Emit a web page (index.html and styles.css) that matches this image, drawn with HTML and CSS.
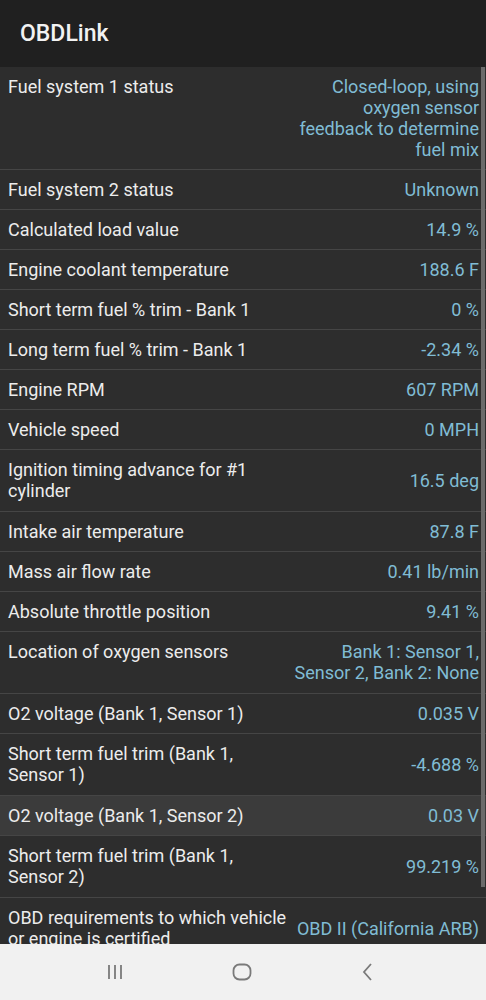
FILE: index.html
```html
<!DOCTYPE html>
<html lang="en">
<head>
    <meta charset="UTF-8">
    <meta name="viewport" content="width=device-width, initial-scale=1.0">
    <title>OBDLink</title>
    <link rel="stylesheet" href="styles.css">
</head>
<body>
    <header class="appbar">
        <h1>OBDLink</h1>
    </header>

    <main class="pid-list">
        <div class="row">
            <div class="label">Fuel system 1 status</div>
            <div class="value">Closed-loop, using oxygen sensor feedback to determine fuel mix</div>
        </div>
        <div class="row">
            <div class="label">Fuel system 2 status</div>
            <div class="value">Unknown</div>
        </div>
        <div class="row">
            <div class="label">Calculated load value</div>
            <div class="value">14.9 %</div>
        </div>
        <div class="row">
            <div class="label">Engine coolant temperature</div>
            <div class="value">188.6 F</div>
        </div>
        <div class="row">
            <div class="label">Short term fuel % trim - Bank 1</div>
            <div class="value">0 %</div>
        </div>
        <div class="row">
            <div class="label">Long term fuel % trim - Bank 1</div>
            <div class="value">-2.34 %</div>
        </div>
        <div class="row">
            <div class="label">Engine RPM</div>
            <div class="value">607 RPM</div>
        </div>
        <div class="row">
            <div class="label">Vehicle speed</div>
            <div class="value">0 MPH</div>
        </div>
        <div class="row tall">
            <div class="label">Ignition timing advance for #1 cylinder</div>
            <div class="value">16.5 deg</div>
        </div>
        <div class="row">
            <div class="label">Intake air temperature</div>
            <div class="value">87.8 F</div>
        </div>
        <div class="row">
            <div class="label">Mass air flow rate</div>
            <div class="value">0.41 lb/min</div>
        </div>
        <div class="row">
            <div class="label">Absolute throttle position</div>
            <div class="value">9.41 %</div>
        </div>
        <div class="row tall">
            <div class="label">Location of oxygen sensors</div>
            <div class="value">Bank 1: Sensor 1, Sensor 2, Bank 2: None</div>
        </div>
        <div class="row">
            <div class="label">O2 voltage (Bank 1, Sensor 1)</div>
            <div class="value">0.035 V</div>
        </div>
        <div class="row tall">
            <div class="label">Short term fuel trim (Bank 1, Sensor 1)</div>
            <div class="value">-4.688 %</div>
        </div>
        <div class="row selected">
            <div class="label">O2 voltage (Bank 1, Sensor 2)</div>
            <div class="value">0.03 V</div>
        </div>
        <div class="row tall">
            <div class="label">Short term fuel trim (Bank 1, Sensor 2)</div>
            <div class="value">99.219 %</div>
        </div>
        <div class="row">
            <div class="label">OBD requirements to which vehicle or engine is certified</div>
            <div class="value">OBD II (California ARB)</div>
        </div>

        <!-- thanh cuộn -->
        <div class="scroll-thumb"></div>
    </main>

    <nav class="navbar">
        <svg class="nav-icon" width="24" height="24" viewBox="0 0 24 24">
            <path d="M6 5v14M12 5v14M18 5v14" stroke="#7a7a7a" stroke-width="1.8" fill="none"/>
        </svg>
        <svg class="nav-icon" width="24" height="24" viewBox="0 0 24 24">
            <rect x="3.5" y="4.5" width="17" height="15" rx="6" stroke="#7a7a7a" stroke-width="1.8" fill="none"/>
        </svg>
        <svg class="nav-icon" width="24" height="24" viewBox="0 0 24 24">
            <path d="M15 4l-7 8 7 8" stroke="#7a7a7a" stroke-width="1.8" fill="none"/>
        </svg>
    </nav>
</body>
</html>
```
FILE: styles.css
```css
/* Reset */
body, h1 {
    margin: 0;
    padding: 0;
}

body {
    background-color: #2d2d2d;
    font-family: Roboto, "Noto Sans", sans-serif;
    width: 486px;
    height: 1000px;
    overflow: hidden;
}

.appbar {
    background-color: #202020;
    height: 67px;
    padding-left: 20px;
    display: flex;
    align-items: center;
}

.appbar h1 {
    color: #f2f2f2;
    font-size: 23px;
    font-weight: 500;
}

.pid-list {
    position: relative;
    height: 877px;
    overflow: hidden;
}

.row {
    display: flex;
    gap: 3px;
    padding: 9px 7px 9px 8px;
    border-bottom: 1px solid #454545;
    font-size: 18px;
    line-height: 21px;
}

/* hàng hai dòng cao hơn một chút */
.row.tall {
    padding-bottom: 10px;
}

.row.selected {
    background-color: #3b3b3b;
}

.label {
    flex: 1;
    color: #ececec;
    align-self: flex-start;
}

.value {
    width: 187px;
    color: #80bcd4;
    text-align: right;
    align-self: center;
}

.scroll-thumb {
    position: absolute;
    top: 0;
    right: 1px;
    width: 4px;
    height: 820px;
    background-color: #6b6b6b;
}

.navbar {
    height: 56px;
    background-color: #f1f1f1;
    display: flex;
    justify-content: space-between;
    align-items: center;
    padding: 0 106px 0 103px;
}
```
